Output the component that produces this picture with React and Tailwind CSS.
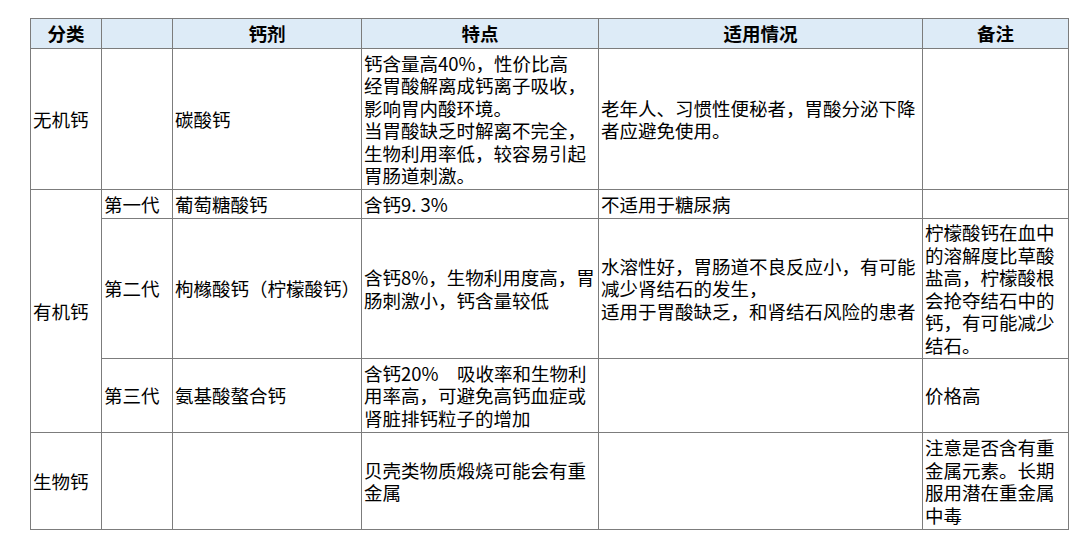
import React from "react";

const td = "border border-[#7c7c7c] px-[2px] py-0 align-middle text-left";
const th = "border border-[#7c7c7c] px-[2px] py-0 align-middle text-center font-bold bg-[#ddebf7]";

function Lines({ lines }) {
  return (
    <>
      {lines.map((l, i) => (
        <React.Fragment key={i}>
          {l}
          {i < lines.length - 1 && <br />}
        </React.Fragment>
      ))}
    </>
  );
}

export default function App() {
  return (
    <div className="w-[1080px] h-[542px] bg-white pt-[18px] pl-[30px] overflow-hidden">
      <table
        className="table-fixed border-collapse w-[1038px] text-[18.5px] leading-[22.5px] text-black whitespace-nowrap"
        style={{ fontFamily: '"Noto Sans CJK SC", "Noto Sans", sans-serif' }}
      >
        <colgroup>
          <col className="w-[71px]" />
          <col className="w-[71px]" />
          <col className="w-[189px]" />
          <col className="w-[237px]" />
          <col className="w-[324px]" />
          <col className="w-[146px]" />
        </colgroup>
        <tbody>
          <tr className="h-[30px]">
            <th className={th}>分类</th>
            <th className={th}></th>
            <th className={th}>钙剂</th>
            <th className={th}>特点</th>
            <th className={th}>适用情况</th>
            <th className={th}>备注</th>
          </tr>
          <tr className="h-[141px]">
            <td className={td}>无机钙</td>
            <td className={td}></td>
            <td className={td}>碳酸钙</td>
            <td className={td}>
              <Lines
                lines={[
                  "钙含量高40%，性价比高",
                  "经胃酸解离成钙离子吸收，",
                  "影响胃内酸环境。",
                  "当胃酸缺乏时解离不完全，",
                  "生物利用率低，较容易引起",
                  "胃肠道刺激。",
                ]}
              />
            </td>
            <td className={td}>
              <Lines lines={["老年人、习惯性便秘者，胃酸分泌下降", "者应避免使用。"]} />
            </td>
            <td className={td}></td>
          </tr>
          <tr className="h-[29px]">
            <td className={td} rowSpan={3}>有机钙</td>
            <td className={td}>第一代</td>
            <td className={td}>葡萄糖酸钙</td>
            <td className={td}>含钙9. 3%</td>
            <td className={td}>不适用于糖尿病</td>
            <td className={td}></td>
          </tr>
          <tr className="h-[140px]">
            <td className={td}>第二代</td>
            <td className={td}>枸橼酸钙（柠檬酸钙）</td>
            <td className={td}>
              <Lines lines={["含钙8%，生物利用度高，胃", "肠刺激小，钙含量较低"]} />
            </td>
            <td className={td}>
              <Lines
                lines={[
                  "水溶性好，胃肠道不良反应小，有可能",
                  "减少肾结石的发生，",
                  "适用于胃酸缺乏，和肾结石风险的患者",
                ]}
              />
            </td>
            <td className={td}>
              <Lines
                lines={[
                  "柠檬酸钙在血中",
                  "的溶解度比草酸",
                  "盐高，柠檬酸根",
                  "会抢夺结石中的",
                  "钙，有可能减少",
                  "结石。",
                ]}
              />
            </td>
          </tr>
          <tr className="h-[74px]">
            <td className={td}>第三代</td>
            <td className={td}>氨基酸螯合钙</td>
            <td className={td}>
              <Lines
                lines={[
                  "含钙20%　吸收率和生物利",
                  "用率高，可避免高钙血症或",
                  "肾脏排钙粒子的增加",
                ]}
              />
            </td>
            <td className={td}></td>
            <td className={td}>价格高</td>
          </tr>
          <tr className="h-[97px]">
            <td className={td}>生物钙</td>
            <td className={td}></td>
            <td className={td}></td>
            <td className={td}>
              <Lines lines={["贝壳类物质煅烧可能会有重", "金属"]} />
            </td>
            <td className={td}></td>
            <td className={td}>
              <Lines
                lines={[
                  "注意是否含有重",
                  "金属元素。长期",
                  "服用潜在重金属",
                  "中毒",
                ]}
              />
            </td>
          </tr>
        </tbody>
      </table>
    </div>
  );
}
